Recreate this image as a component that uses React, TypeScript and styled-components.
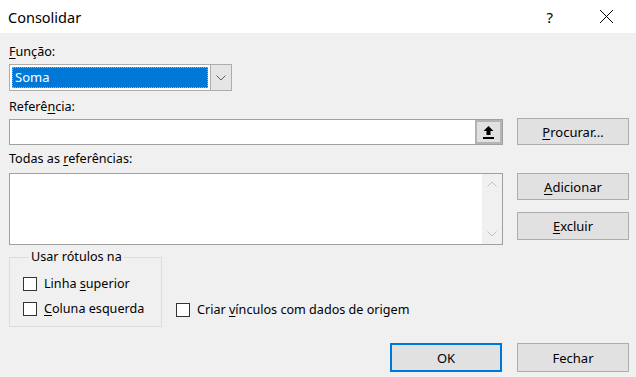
import React from "react";
import styled, { createGlobalStyle } from "styled-components";

const GlobalStyle = createGlobalStyle`
  html, body {
    margin: 0;
    padding: 0;
    background: #f0f0f0;
  }
  body {
    font-family: "Noto Sans", "Open Sans", sans-serif;
    font-size: 12.6px;
    color: #000;
  }
`;

const Window = styled.div`
  width: 636px;
  height: 377px;
  background: #f0f0f0;
  display: flex;
  flex-direction: column;
  overflow: hidden;
`;

const TitleBar = styled.div`
  height: 33px;
  background: #fff;
  display: flex;
  align-items: center;
  justify-content: space-between;
  padding-left: 8px;
`;

const Title = styled.span`
  font-size: 14.5px;
  color: #000;
`;

const TitleButtons = styled.div`
  display: flex;
  align-items: center;
  gap: 46px;
  padding-right: 22px;
  font-size: 15px;
`;

const Body = styled.div`
  display: flex;
  flex-direction: column;
  padding: 11px 7px 0 9px;
`;

const Label = styled.div<{ $top?: number }>`
  line-height: 16px;
  height: 16px;
  margin-top: ${(p) => p.$top ?? 0}px;
`;

const Key = styled.span`
  text-decoration: underline;
  text-underline-offset: 2px;
`;

const Row = styled.div<{ $top?: number; $align?: string }>`
  display: flex;
  gap: 14px;
  align-items: ${(p) => p.$align ?? "flex-start"};
  margin-top: ${(p) => p.$top ?? 0}px;
`;

const Combo = styled.div`
  margin-top: 4px;
  width: 223px;
  height: 27px;
  box-sizing: border-box;
  border: 1px solid #adadad;
  background: #fff;
  display: flex;
`;

const ComboValue = styled.div`
  flex: 1;
  margin: 2px;
  background: #0078d7;
  color: #fff;
  outline: 1px dotted #ff9a2e;
  outline-offset: -1px;
  padding-left: 3px;
  line-height: 21px;
  font-size: 13px;
`;

const ComboArrow = styled.div`
  width: 20px;
  background: #e5e5e5;
  border-left: 1px solid #adadad;
  display: flex;
  align-items: center;
  justify-content: center;
`;

const TextBox = styled.div`
  width: 494px;
  height: 26px;
  box-sizing: border-box;
  border: 1px solid #a0a0a0;
  background: #fff;
  display: flex;
  justify-content: flex-end;
`;

const CollapseButton = styled.div`
  width: 27px;
  height: 100%;
  box-sizing: border-box;
  border: 2px solid #b4b4b4;
  background: #e1e1e1;
  display: flex;
  align-items: center;
  justify-content: center;
`;

const Button = styled.div<{ $h?: number; $default?: boolean }>`
  width: 112px;
  height: ${(p) => p.$h ?? 27}px;
  box-sizing: border-box;
  border: ${(p) => (p.$default ? "2px solid #0078d7" : "1px solid #adadad")};
  background: #e1e1e1;
  display: flex;
  align-items: center;
  justify-content: center;
  font-size: 13px;
`;

const ButtonColumn = styled.div`
  display: flex;
  flex-direction: column;
  gap: 12px;
`;

const ListBox = styled.div`
  width: 494px;
  height: 72px;
  box-sizing: border-box;
  border: 1px solid #a0a0a0;
  background: #fff;
  display: flex;
  justify-content: flex-end;
`;

const ScrollBar = styled.div`
  width: 20px;
  background: #f0f0f0;
  display: flex;
  flex-direction: column;
  justify-content: space-between;
  align-items: center;
  padding: 7px 0;
`;

const GroupBox = styled.fieldset`
  margin: 0;
  width: 153px;
  height: 78px;
  box-sizing: border-box;
  border: 1px solid #dcdcdc;
  padding: 12px 0 0 13px;
  display: flex;
  flex-direction: column;
  gap: 11px;
`;

const Legend = styled.legend`
  margin-left: 6px;
  padding: 0 2px;
  line-height: 16px;
`;

const Check = styled.label<{ $bottom?: number }>`
  display: flex;
  align-items: center;
  gap: 7px;
  margin-bottom: ${(p) => p.$bottom ?? 0}px;
  line-height: 14px;
`;

const Box = styled.span`
  width: 14px;
  height: 14px;
  box-sizing: border-box;
  border: 1px solid #333;
  background: #fff;
  flex: none;
`;

const Footer = styled.div`
  display: flex;
  justify-content: flex-end;
  gap: 15px;
  margin-top: 16px;
`;

export default function App() {
  return (
    <>
      <GlobalStyle />
      <Window>
        <TitleBar>
          <Title>Consolidar</Title>
          <TitleButtons>
            <span>?</span>
            <svg width="15" height="15" viewBox="0 0 15 15">
              <path d="M1 1 L14 14 M14 1 L1 14" stroke="#000" strokeWidth="1" />
            </svg>
          </TitleButtons>
        </TitleBar>
        <Body>
          <Label>
            <Key>F</Key>unção:
          </Label>
          <Combo>
            <ComboValue>Soma</ComboValue>
            <ComboArrow>
              <svg width="10" height="6" viewBox="0 0 10 6">
                <path d="M0.5 0.5 L5 5 L9.5 0.5" fill="none" stroke="#606060" />
              </svg>
            </ComboArrow>
          </Combo>
          <Label $top={8}>
            Referê<Key>n</Key>cia:
          </Label>
          <Row $top={3} $align="flex-end">
            <TextBox>
              <CollapseButton>
                <svg width="11" height="13" viewBox="0 0 11 13">
                  <path d="M5.5 0 L10.5 5 L7.5 5 L7.5 9 L3.5 9 L3.5 5 L0.5 5 Z" fill="#000" />
                  <rect x="0" y="11" width="11" height="2" fill="#000" />
                </svg>
              </CollapseButton>
            </TextBox>
            <Button>
              <Key>P</Key>rocurar...
            </Button>
          </Row>
          <Label $top={6}>
            Todas as <Key>r</Key>eferências:
          </Label>
          <Row $top={6}>
            <ListBox>
              <ScrollBar>
                <svg width="10" height="6" viewBox="0 0 10 6">
                  <path d="M0.5 5.5 L5 1 L9.5 5.5" fill="none" stroke="#c2c2c2" />
                </svg>
                <svg width="10" height="6" viewBox="0 0 10 6">
                  <path d="M0.5 0.5 L5 5 L9.5 0.5" fill="none" stroke="#c2c2c2" />
                </svg>
              </ScrollBar>
            </ListBox>
            <ButtonColumn>
              <Button>
                <Key>A</Key>dicionar
              </Button>
              <Button $h={28}>
                <Key>E</Key>xcluir
              </Button>
            </ButtonColumn>
          </Row>
          <Row $top={4} $align="flex-end">
            <GroupBox>
              <Legend>Usar rótulos na</Legend>
              <Check>
                <Box />
                <span>
                  Linha <Key>s</Key>uperior
                </span>
              </Check>
              <Check>
                <Box />
                <span>
                  <Key>C</Key>oluna esquerda
                </span>
              </Check>
            </GroupBox>
            <Check $bottom={10}>
              <Box />
              <span>
                Criar <Key>v</Key>ínculos com dados de origem
              </span>
            </Check>
          </Row>
          <Footer>
            <Button $h={29} $default>
              OK
            </Button>
            <Button $h={29}>Fechar</Button>
          </Footer>
        </Body>
      </Window>
    </>
  );
}
